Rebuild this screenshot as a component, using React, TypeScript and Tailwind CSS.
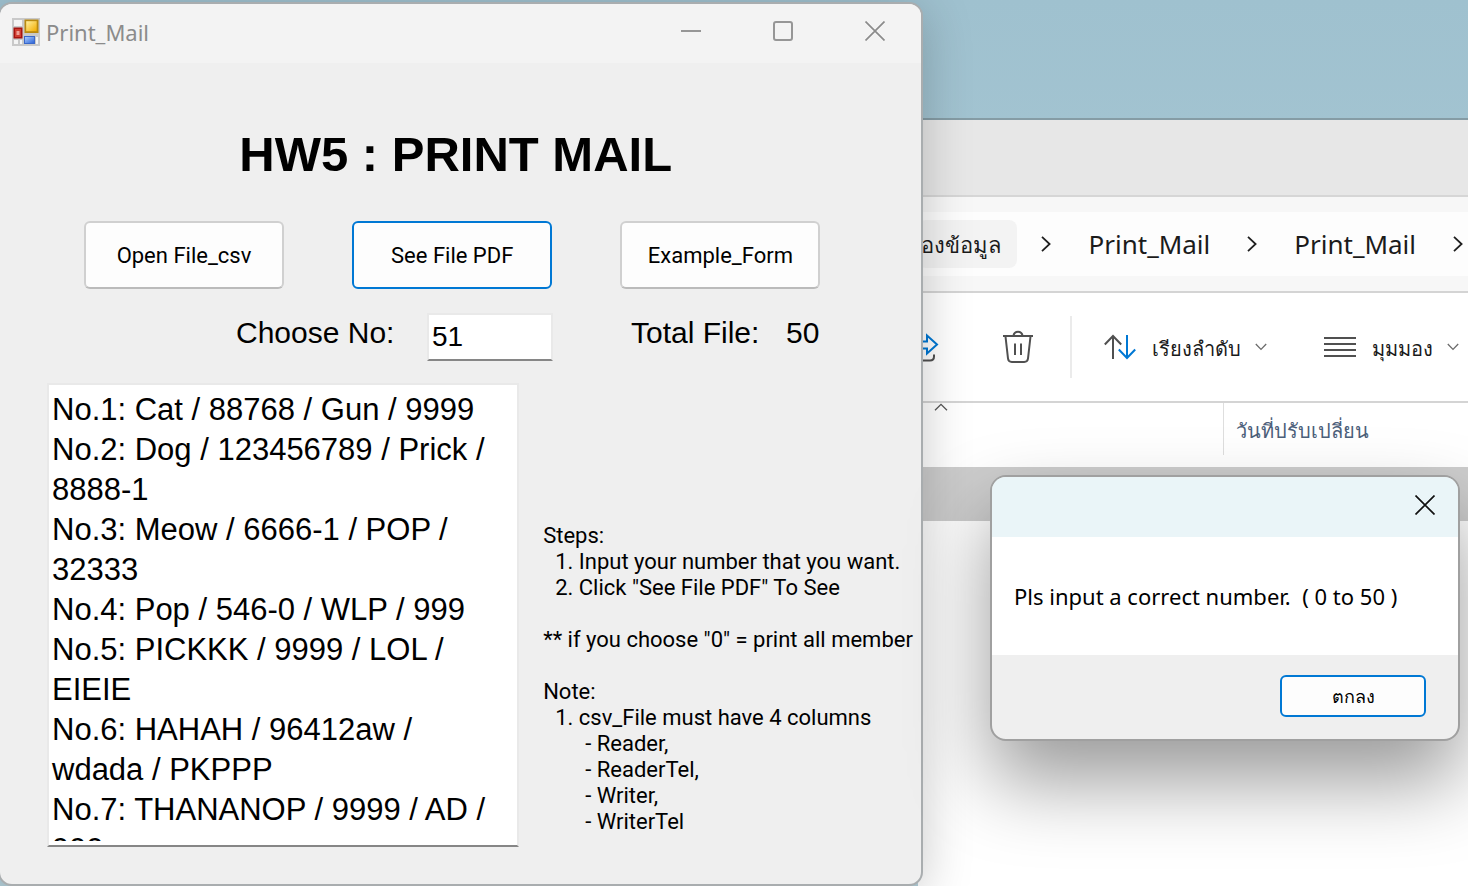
import type { ReactNode } from "react";

const members = `No.1: Cat / 88768 / Gun / 9999
No.2: Dog / 123456789 / Prick / 8888-1
No.3: Meow / 6666-1 / POP / 32333
No.4: Pop / 546-0 / WLP / 999
No.5: PICKKK / 9999 / LOL / EIEIE
No.6: HAHAH / 96412aw / wdada / PKPPP
No.7: THANANOP / 9999 / AD / 999`;

function Cross({ className }: { className: string }) {
  return (
    <svg viewBox="0 0 20 20" className={className} fill="none" stroke="currentColor" strokeWidth="1.7">
      <path d="M.5 .5 19.5 19.5M19.5 .5.5 19.5" />
    </svg>
  );
}

function Chevron() {
  return (
    <svg viewBox="0 0 10 16" className="h-4 w-[10px] shrink-0" fill="none" stroke="#1f1f1f" strokeWidth="1.8">
      <path d="M1 .8 8.6 8 1 15.2" />
    </svg>
  );
}

function Caret() {
  return (
    <svg viewBox="0 0 12 8" className="h-2 w-3 shrink-0" fill="none" stroke="#6b6b6b" strokeWidth="1.3">
      <path d="M.8 1 6 6.4 11.2 1" />
    </svg>
  );
}

function AppIcon() {
  return (
    <svg viewBox="0 0 28 28" className="h-7 w-7 shrink-0">
      <defs>
        <linearGradient id="gold" x1="0" y1="0" x2="1" y2="1">
          <stop offset="0" stopColor="#fff0a0" />
          <stop offset="1" stopColor="#f2ad00" />
        </linearGradient>
        <linearGradient id="blue" x1="0" y1="0" x2="1" y2="1">
          <stop offset="0" stopColor="#a9cbff" />
          <stop offset="1" stopColor="#2f66d8" />
        </linearGradient>
      </defs>
      <rect width="28" height="28" fill="#c9c9c9" />
      <path d="M2 2h8v6H2zM2 22h4v4H2zM8 22h2v4H8zM24 19h2v7h-2z" fill="#f4f4f4" />
      <rect x="1.500" y="9.500" width="9" height="11" fill="#a5130f" />
      <rect x="3" y="11" width="6" height="8" fill="#cf3c30" />
      <rect x="4.500" y="13" width="3" height="4" fill="#f0a096" />
      <rect x="12.500" y="1.500" width="14" height="13.500" fill="#b98a10" />
      <rect x="14.200" y="3.200" width="10.500" height="10" fill="url(#gold)" />
      <rect x="12" y="18" width="11" height="8" fill="#3a68c8" />
      <rect x="13" y="19" width="9" height="6" fill="url(#blue)" />
    </svg>
  );
}

function FormButton({ children, focused = false }: { children: ReactNode; focused?: boolean }) {
  return (
    <button
      type="button"
      className={
        focused
          ? "h-[68px] w-[200px] rounded-md border-2 border-[#0078d4] bg-[#fdfdfd] font-[Roboto,sans-serif] text-[22px]"
          : "h-[68px] w-[200px] rounded-md border-2 border-[#d0d0d0] border-b-[#bbbbbb] bg-[#fdfdfd] font-[Roboto,sans-serif] text-[22px]"
      }
    >
      {children}
    </button>
  );
}

function Explorer() {
  return (
    <section className="absolute top-[118px] right-0 bottom-0 left-[62.5%] flex flex-col overflow-hidden border-t-2 border-[#859ca5] bg-white font-['Noto_Sans',sans-serif] text-[#1b1b1b]">
      <div className="h-[77px] shrink-0 border-b-2 border-[#d6d6d6] bg-[#e7e7e7]" />
      <nav className="shrink-0 border-b-2 border-[#d4d4d4] bg-[#f7f7f7] py-[15px]">
        <div className="flex h-16 items-center bg-[#fdfdfd] text-[26px] whitespace-nowrap">
          <a href="#data" className="flex h-12 w-[99px] shrink-0 items-center justify-end rounded-lg bg-[#f3f3f3] pr-4 text-[22px]">
            องข้อมูล
          </a>
          <span className="ml-6"><Chevron /></span>
          <a href="#parent" className="ml-[38px]">Print_Mail</a>
          <span className="ml-[37px]"><Chevron /></span>
          <a href="#current" className="ml-[37px]">Print_Mail</a>
          <span className="ml-[37px]"><Chevron /></span>
        </div>
      </nav>
      <div className="flex h-[110px] shrink-0 items-center border-b-2 border-[#d4d4d4] text-xl whitespace-nowrap">
        <button type="button" aria-label="Share">
          <svg viewBox="0 0 22 32" className="h-8 w-[22px]" fill="none">
            <path d="M0 10.500h9V4.500L19 13.500 9 22.500V17.500H0" stroke="#0078d4" strokeWidth="2" />
            <path d="M0 29.500h12q4 0 4-4v-2" stroke="#505050" strokeWidth="2" />
          </svg>
        </button>
        <button type="button" aria-label="Delete" className="ml-[62px]">
          <svg viewBox="0 0 32 34" className="h-[34px] w-8" fill="none" stroke="#505050" strokeWidth="2">
            <path d="M1 6h30M11.500 5.500q.8-3.800 4.500-3.800t4.500 3.800M3.500 6.500 6 28.500q.4 3.500 3.800 3.500h12.400q3.400 0 3.800-3.500L28.500 6.500M13 13.500v11.500M19 13.500v11.500" />
          </svg>
        </button>
        <div className="ml-9 h-[62px] w-[2px] shrink-0 bg-[#ebebeb]" />
        <button type="button" className="ml-8 flex items-center">
          <svg viewBox="0 0 32 26" className="h-[26px] w-8" fill="none" strokeWidth="2">
            <path d="M9 25V2M.8 10.500 9 2l8.200 8.500" stroke="#505050" />
            <path d="M23 1v23M14.800 15.500 23 24l8.200-8.500" stroke="#0078d4" />
          </svg>
          <span className="mr-[14px] ml-4 pt-1">เรียงลำดับ</span>
          <Caret />
        </button>
        <button type="button" className="ml-[57px] flex items-center">
          <svg viewBox="0 0 32 20" className="h-5 w-8" stroke="#505050" strokeWidth="2">
            <path d="M0 1h32M0 7h32M0 13h32M0 19h32" />
          </svg>
          <span className="mr-[14px] ml-4 pt-1">มุมมอง</span>
          <Caret />
        </button>
      </div>
      <div className="flex h-16 shrink-0 items-start">
        <div className="h-[52px] w-[306px] shrink-0 border-r border-[#dedede] pl-4">
          <svg viewBox="0 0 14 8" className="h-2 w-[14px]" fill="none" stroke="#555" strokeWidth="1.3">
            <path d="M1 7.300 7 1.300 13 7.300" />
          </svg>
        </div>
        <span className="pl-3 text-xl leading-[56px] whitespace-nowrap text-[#4c607a]">วันที่ปรับเปลี่ยน</span>
      </div>
      <div className="h-[54px] shrink-0 bg-[#cdcdcd]" />
    </section>
  );
}

function MainWindow() {
  return (
    <section className="absolute top-[2px] right-[37.1%] bottom-0 left-[-2px] flex flex-col overflow-hidden rounded-[14px] border-2 border-[#a9adaf] bg-[#efefef] font-['Liberation_Sans',Arial,sans-serif] text-black shadow-[0_8px_50px_rgba(0,0,0,0.22)]">
      <header className="flex h-[59px] shrink-0 items-start bg-[#f3f3f3] pl-3 text-[#8b8b8b]">
        <div className="flex flex-1 items-center pt-3">
          <AppIcon />
          <span className="ml-[6px] font-['Noto_Sans',sans-serif] text-[22px] leading-8">Print_Mail</span>
        </div>
        <button type="button" aria-label="Minimize" className="flex h-[54px] w-[92px] items-center justify-center">
          <span className="h-[2px] w-5 bg-[#969696]" />
        </button>
        <button type="button" aria-label="Maximize" className="flex h-[54px] w-[92px] items-center justify-center">
          <span className="h-5 w-5 rounded-[3px] border-2 border-[#969696]" />
        </button>
        <button type="button" aria-label="Close" className="flex h-[54px] w-[92px] items-center justify-center">
          <Cross className="h-5 w-5" />
        </button>
      </header>
      <h1 className="mt-[61px] pr-[10px] text-center text-[49px] leading-[60px] font-bold">HW5 : PRINT MAIL</h1>
      <div className="mt-[37px] flex shrink-0 justify-between pr-[101px] pl-[84px]">
        <FormButton>Open File_csv</FormButton>
        <FormButton focused>See File PDF</FormButton>
        <FormButton>Example_Form</FormButton>
      </div>
      <div className="mt-6 flex shrink-0 items-start pl-[236px] text-[30px] leading-10 whitespace-nowrap">
        <label htmlFor="choose" className="w-[191px]">Choose No:</label>
        <input
          id="choose"
          defaultValue="51"
          className="h-12 w-[126px] border-2 border-[#e9e9e9] border-b-[#868686] bg-white px-[3px] text-[28px] outline-none"
        />
        <span className="ml-[78px] w-[155px]">Total File:</span>
        <span>50</span>
      </div>
      <div className="mt-[22px] flex min-h-0 items-start pl-[47px]">
        <div className="h-[464px] w-[54%] shrink-0 border-2 border-[#e9e9e9] border-b-[#868686] bg-white pb-1">
          <textarea
            aria-label="Members"
            readOnly
            defaultValue={members}
            className="block h-full w-full resize-none overflow-hidden pt-[5px] pr-4 pl-[3px] text-[31px] leading-10 outline-none"
          />
        </div>
        <div className="pt-[140px] pl-6 font-[Roboto,sans-serif] text-[22px] leading-[26px] whitespace-nowrap">
          <p>Steps:</p>
          <p className="pl-3">1. Input your number that you want.</p>
          <p className="pl-3">2. Click "See File PDF" To See</p>
          <p className="mt-[26px]">** if you choose "0" = print all member</p>
          <p className="mt-[26px]">Note:</p>
          <p className="pl-3">1. csv_File must have 4 columns</p>
          <p className="pl-[42px]">- Reader,</p>
          <p className="pl-[42px]">- ReaderTel,</p>
          <p className="pl-[42px]">- Writer,</p>
          <p className="pl-[42px]">- WriterTel</p>
        </div>
      </div>
    </section>
  );
}

function MessageBox() {
  return (
    <section
      role="dialog"
      aria-label="Message"
      className="absolute top-[475px] right-2 w-[470px] overflow-hidden rounded-[16px] border-2 border-[#a0a0a0] bg-[#efefef] font-['Noto_Sans',sans-serif] text-black shadow-[0_40px_80px_rgba(0,0,0,0.4)]"
    >
      <header className="flex h-[60px] items-start justify-end bg-[#eaf5f8] pt-[18px] pr-[23px]">
        <button type="button" aria-label="Close" className="text-[#111]">
          <Cross className="h-5 w-5" />
        </button>
      </header>
      <p className="bg-white pl-[22px] text-[22px] leading-[118px] whitespace-pre">Pls input a correct number.  ( 0 to 50 )</p>
      <footer className="flex justify-end pt-5 pr-8 pb-[22px]">
        <button type="button" className="h-[42px] w-[146px] rounded-md border-2 border-[#0078d4] bg-[#fdfdfd] text-lg">
          ตกลง
        </button>
      </footer>
    </section>
  );
}

export default function App() {
  return (
    <main className="relative h-screen overflow-hidden bg-linear-to-b from-[#9fc1cf] to-[#b4d0da]">
      <Explorer />
      <MainWindow />
      <MessageBox />
    </main>
  );
}
